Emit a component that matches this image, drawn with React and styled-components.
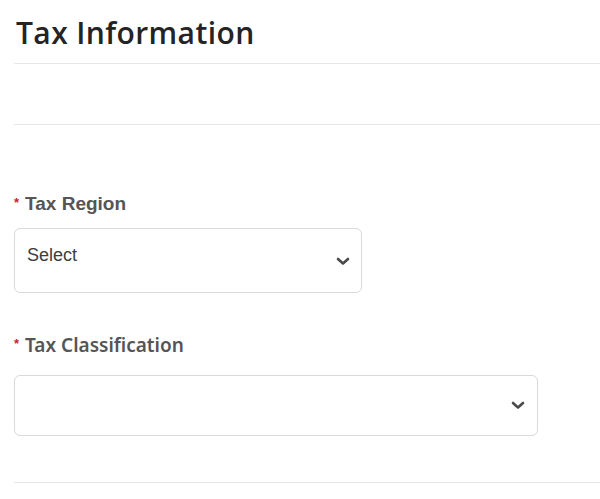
import React from "react";
import styled, { createGlobalStyle } from "styled-components";

const GlobalStyle = createGlobalStyle`
  body {
    margin: 0;
    background: #ffffff;
    font-family: "Liberation Sans", Arial, sans-serif;
  }
`;

const Page = styled.div`
  padding-left: 14px;
  display: flex;
  flex-direction: column;
`;

const Title = styled.h1`
  margin: 0;
  padding-top: 16px;
  padding-left: 2px;
  height: 46px;
  box-sizing: border-box;
  font-family: "Open Sans", "Liberation Sans", sans-serif;
  font-weight: 600;
  font-size: 30px;
  line-height: 33px;
  color: #242424;
  letter-spacing: 0.4px;
`;

const Divider = styled.hr`
  margin: 0;
  border: 0;
  border-top: 1px solid #e6e6e6;
  margin-top: ${(p) => p.$top || 0}px;
`;

const Field = styled.div`
  display: flex;
  flex-direction: column;
  margin-top: ${(p) => p.$top}px;
`;

const Label = styled.label`
  display: flex;
  align-items: flex-start;
  font-family: ${(p) => p.$font};
  font-weight: ${(p) => p.$weight};
  font-size: ${(p) => p.$size}px;
  line-height: 22px;
  color: #555555;
`;

const Star = styled.span`
  color: #c0272d;
  font-family: "Liberation Sans", Arial, sans-serif;
  font-weight: 700;
  font-size: 13px;
  line-height: 13px;
  margin-top: 3px;
  margin-right: ${(p) => p.$gap}px;
`;

const SelectBox = styled.div`
  margin-top: ${(p) => p.$top}px;
  width: ${(p) => p.$width}px;
  height: ${(p) => p.$height}px;
  box-sizing: border-box;
  border: 1px solid #d9d9d9;
  border-radius: 6px;
  background: #fff;
  display: flex;
  align-items: ${(p) => (p.$placeholder ? "flex-start" : "center")};
  justify-content: space-between;
  padding: ${(p) => (p.$placeholder ? "15px 12px 0 12px" : "0 12px")};
  position: relative;
`;

const Placeholder = styled.span`
  font-size: 18px;
  line-height: 22px;
  color: #3d3d3d;
`;

const Chevron = styled.svg`
  width: 14px;
  height: 9px;
  position: absolute;
  right: ${(p) => p.$right}px;
  top: ${(p) => p.$top}px;
`;

function ChevronDown({ right, top }) {
  return (
    <Chevron $right={right} $top={top} viewBox="0 0 14 9">
      <path
        d="M2 2 L7 6.5 L12 2"
        fill="none"
        stroke="#4a4a4a"
        strokeWidth="2.6"
        strokeLinecap="round"
        strokeLinejoin="round"
      />
    </Chevron>
  );
}

export default function App() {
  return (
    <>
      <GlobalStyle />
      <Page>
        <Title>Tax Information</Title>
        <Divider $top={17} />
        <Divider $top={60} />

        <Field $top={68}>
          <Label
            $font={'"Liberation Sans", Arial, sans-serif'}
            $weight={700}
            $size={19}
          >
            <Star $gap={6}>*</Star>
            Tax Region
          </Label>
          <SelectBox $top={13} $width={348} $height={65} $placeholder>
            <Placeholder>Select</Placeholder>
            <ChevronDown right={11} top={28} />
          </SelectBox>
        </Field>

        <Field $top={41}>
          <Label
            $font={'"Noto Sans", "Liberation Sans", sans-serif'}
            $weight={600}
            $size={19}
          >
            <Star $gap={6}>*</Star>
            Tax Classification
          </Label>
          <SelectBox $top={19} $width={524} $height={61}>
            <ChevronDown right={12} top={25} />
          </SelectBox>
        </Field>

        <Divider $top={46} />
      </Page>
    </>
  );
}
